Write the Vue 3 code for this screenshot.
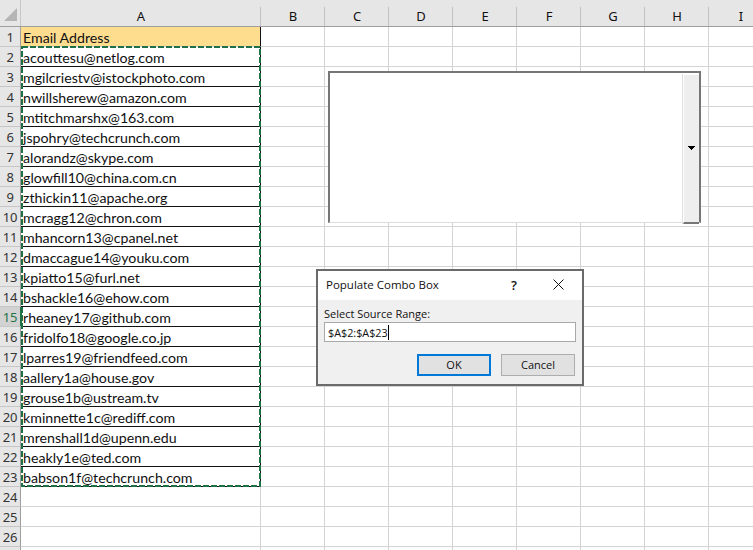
<script setup>
const columns = ['B', 'C', 'D', 'E', 'F', 'G', 'H', 'I']

const emails = [
  'acouttesu@netlog.com',
  'mgilcriestv@istockphoto.com',
  'nwillsherew@amazon.com',
  'mtitchmarshx@163.com',
  'jspohry@techcrunch.com',
  'alorandz@skype.com',
  'glowfill10@china.com.cn',
  'zthickin11@apache.org',
  'mcragg12@chron.com',
  'mhancorn13@cpanel.net',
  'dmaccague14@youku.com',
  'kpiatto15@furl.net',
  'bshackle16@ehow.com',
  'rheaney17@github.com',
  'fridolfo18@google.co.jp',
  'lparres19@friendfeed.com',
  'aallery1a@house.gov',
  'grouse1b@ustream.tv',
  'kminnette1c@rediff.com',
  'mrenshall1d@upenn.edu',
  'heakly1e@ted.com',
  'babson1f@techcrunch.com',
]

// row 1 is the header, rows 24-26 are empty, the last row is cut off by the window
const rows = [
  { num: 1, text: 'Email Address', kind: 'title' },
  ...emails.map((text, i) => ({ num: i + 2, text, kind: 'data' })),
  { num: 24, text: '', kind: 'empty' },
  { num: 25, text: '', kind: 'empty' },
  { num: 26, text: '', kind: 'empty' },
  { num: '', text: '', kind: 'empty' },
]
</script>

<template>
  <div class="sheet">
    <div class="head-row">
      <div class="corner"><span class="corner-mark"></span></div>
      <div class="col-head col-a">A</div>
      <div v-for="c in columns" :key="c" class="col-head col-n">{{ c }}</div>
    </div>

    <div v-for="r in rows" :key="r.num" class="row">
      <div class="row-num" :class="{ picked: r.num === 15 }">{{ r.num }}</div>
      <div class="cell col-a" :class="r.kind">{{ r.text }}</div>
      <div v-for="c in columns" :key="c" class="cell col-n"></div>
    </div>

    <!-- copy marquee round A2:A23 -->
    <svg class="marquee" width="242" height="443" viewBox="0 0 242 443">
      <rect x="2" y="1" width="238" height="439" fill="none" stroke="#1f6f47" stroke-width="2" stroke-dasharray="6 2" />
    </svg>

    <div class="combo">
      <div class="combo-list"></div>
      <div class="combo-btn">
        <svg width="8" height="5" viewBox="0 0 8 5"><path d="M0 0h7v1H6v1H5v1H4v1H3V3H2V2H1V1H0z" fill="#000" /></svg>
      </div>
    </div>

    <div class="dialog">
      <div class="dlg-title">
        <span class="dlg-name">Populate Combo Box</span>
        <span class="dlg-help">?</span>
        <svg class="dlg-close" width="11" height="11" viewBox="0 0 11 11">
          <path d="M0.5 0.5l10 10M10.5 0.5l-10 10" stroke="#111" stroke-width="1" fill="none" />
        </svg>
      </div>
      <div class="dlg-body">
        <label class="dlg-label">Select Source Range:</label>
        <div class="dlg-input">$A$2:$A$23<span class="caret"></span></div>
        <div class="dlg-actions">
          <button class="btn btn-ok">OK</button>
          <button class="btn">Cancel</button>
        </div>
      </div>
    </div>
  </div>
</template>

<style>
html, body {
  margin: 0;
  background: #fff;
  overflow: hidden;
}
</style>

<style scoped>
.sheet {
  position: relative;
  width: 753px;
  height: 550px;
  overflow: hidden;
  background: #fff;
  font-family: Lato, "Liberation Sans", sans-serif;
  color: #111;
}
.head-row {
  display: flex;
  height: 27px;
  background: #e6e6e6;
  border-bottom: 1px solid #9e9e9e;
  box-sizing: border-box;
}
.corner {
  width: 21px;
  flex: none;
  box-sizing: border-box;
  padding: 8px 0 0 4px;
  border-right: 1px solid #c6c6c6;
}
.corner-mark {
  display: block;
  width: 0;
  height: 0;
  border-left: 13px solid transparent;
  border-bottom: 13px solid #b5b5b5;
}
.col-head {
  flex: none;
  box-sizing: border-box;
  padding-top: 7px;
  height: 26px;
  line-height: 19px;
  text-align: center;
  font-family: "Noto Sans", sans-serif;
  font-size: 13px;
  background: linear-gradient(#e6e6e6 7px, transparent 7px),
    linear-gradient(#c0c0c0, #c0c0c0) right top / 1px 100% no-repeat;
}
.col-a { width: 240px; }
.col-n { width: 64px; }
.row {
  display: flex;
  height: 20px;
}
.row-num {
  width: 21px;
  flex: none;
  box-sizing: border-box;
  background: #e6e6e6;
  border-right: 1px solid #9e9e9e;
  border-bottom: 1px solid #c6c6c6;
  text-align: center;
  line-height: 21px;
  font-family: "Noto Sans", sans-serif;
  font-size: 13px;
  letter-spacing: -0.3px;
  color: #333;
}
.row-num.picked {
  position: relative;
  width: 22px;
  margin-right: -1px;
  background: #d2d2d2;
  color: #217346;
  border-right: 2px solid #217346;
}
.cell {
  flex: none;
  box-sizing: border-box;
  height: 20px;
  border-right: 1px solid #d4d4d4;
  border-bottom: 1px solid #d4d4d4;
  padding-left: 2px;
  line-height: 21px;
  font-size: 14.2px;
  white-space: nowrap;
  overflow: hidden;
}
.cell.title {
  background: #ffdd8f;
  border-right-color: #111;
}
.cell.data {
  border-right-color: #111;
  border-bottom-color: #111;
}
.marquee {
  position: absolute;
  left: 20px;
  top: 46px;
}
.combo {
  position: absolute;
  left: 328px;
  top: 71px;
  width: 373px;
  height: 152px;
  display: flex;
  box-sizing: border-box;
  background: #fff;
  border-top: 2px solid #767676;
  border-left: 2px solid #767676;
  border-right: 2px solid #767676;
  border-bottom: 1px solid #dedede;
}
.combo-list {
  flex: 1;
}
.combo-btn {
  width: 15px;
  height: 147px;
  margin-top: 1px;
  display: flex;
  align-items: center;
  justify-content: center;
  background: #eeeeee;
  border-left: 1px solid #fff;
  border-top: 1px solid #fff;
  border-bottom: 2px solid #767676;
  box-shadow: -1px 0 0 #e0e0e0;
}
.dialog {
  position: absolute;
  left: 316px;
  top: 269px;
  width: 268px;
  height: 117px;
  box-sizing: border-box;
  border: 2px solid #6a6a6a;
  display: flex;
  flex-direction: column;
  font-family: "Open Sans", "Noto Sans", sans-serif;
  font-size: 11px;
  background: #f0f0f0;
}
.dlg-title {
  height: 29px;
  flex: none;
  background: #fff;
  display: flex;
  align-items: center;
  padding: 0 0 2px 8px;
  box-sizing: border-box;
}
.dlg-name {
  flex: 1;
  font-size: 11.5px;
}
.dlg-help {
  margin-right: 36px;
  font-size: 13px;
  font-weight: 600;
}
.dlg-close {
  margin-right: 18px;
}
.dlg-body {
  flex: 1;
  padding: 6px 6px 0;
}
.dlg-label {
  display: block;
  line-height: 16px;
  height: 16px;
  font-size: 11px;
}
.dlg-input {
  height: 20px;
  box-sizing: border-box;
  background: #fff;
  border: 1px solid #a9a9a9;
  padding-left: 3px;
  font-size: 10.8px;
  display: flex;
  align-items: center;
}
.caret {
  width: 1px;
  height: 15px;
  background: #000;
}
.dlg-actions {
  display: flex;
  justify-content: flex-end;
  gap: 10px;
  margin-top: 12px;
  padding-right: 1px;
}
.btn {
  width: 74px;
  height: 22px;
  padding: 0 0 1px;
  box-sizing: border-box;
  border: 1px solid #adadad;
  background: #e1e1e1;
  font-family: inherit;
  font-size: 11px;
  color: #111;
}
.btn-ok {
  border: 2px solid #0078d7;
}
</style>
